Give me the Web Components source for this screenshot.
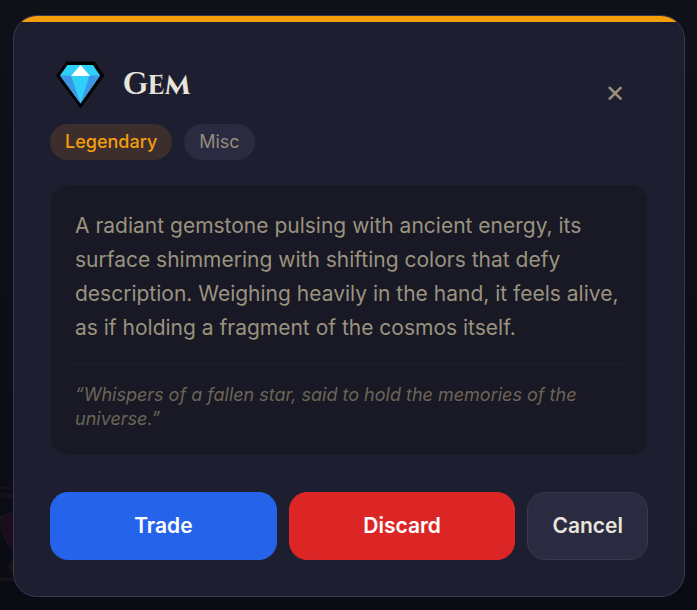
<!DOCTYPE html>
<html lang="en">
<head>
<meta charset="utf-8">
<meta name="viewport" content="width=device-width, initial-scale=1">
<title>Gem</title>
<style>
html, body { height: 100%; }
body { margin: 0; background: #0d0d15; font-family: Inter, "Liberation Sans", sans-serif; }
</style>
</head>
<body>
<item-scene>
  <item-dialog label="Gem">
    <gem-icon slot="icon"></gem-icon>
    <span slot="title">Gem</span>
    <item-tag slot="tags" tone="legendary">Legendary</item-tag>
    <item-tag slot="tags">Misc</item-tag>
    <item-lore>
      A radiant gemstone pulsing with ancient energy, its surface shimmering with shifting colors that defy description. Weighing heavily in the hand, it feels alive, as if holding a fragment of the cosmos itself.
      <span slot="quote">“Whispers of a fallen star, said to hold the memories of the universe.”</span>
    </item-lore>
    <item-action slot="actions" tone="trade">Trade</item-action>
    <item-action slot="actions" tone="discard">Discard</item-action>
    <item-action slot="actions">Cancel</item-action>
  </item-dialog>
</item-scene>
<script>
const define = (name, html, setup) => {
  const template = document.createElement("template");
  template.innerHTML = html;
  customElements.define(name, class extends HTMLElement {
    constructor() {
      super();
      this.attachShadow({ mode: "open" }).append(template.content.cloneNode(true));
    }
    connectedCallback() { if (setup) setup(this); }
  });
};

define("item-scene", `
<style>
:host { display: block; position: relative; box-sizing: border-box; min-height: 100%; padding: 15px 12px 12px 13px;
  background: linear-gradient(#101018, #0d0d17 60%, #0b0b14); }
.backdrop { position: absolute; left: 0; bottom: 0; width: 60px; height: 140px; }
</style>
<svg class="backdrop" viewBox="0 0 60 140" aria-hidden="true">
  <path d="M0 17H60V19H0Z M0 23H60V28H0Z" fill="#15111a"/>
  <path d="M0 108H60V111H0Z" fill="#171216"/>
  <path d="M18 40Q10 43 1 47Q0 66 14 80L40 60Z" fill="#1d0c19" stroke="#15151f" stroke-width="2"/>
  <circle cx="16" cy="97" r="7" fill="#1b1214"/>
</svg>
<slot></slot>`);

define("item-dialog", `
<style>
:host { display: block; position: relative; box-sizing: border-box; border: 1px solid #3a3850; border-radius: 24px;
  background: #1e1e31; overflow: hidden; }
.bar { height: 6px; background: #f59e0b; }
.content { padding: 36px; }
header { display: flex; align-items: center; gap: 13px; height: 54px; }
h1 { margin: 0; flex: 1; font: bold 30px/42px Cinzel, "Liberation Serif", serif; color: #e8e4dc; }
button { align-self: flex-end; width: 66px; height: 36px; padding: 0; border: 0; background: none; color: #9a917c;
  font: 500 24px/36px Inter, "Liberation Sans", sans-serif; cursor: pointer; }
.tags { display: flex; flex-wrap: wrap; gap: 12px; margin: 12px 0 24px; }
.actions { display: flex; gap: 12px; margin-top: 36px; }
</style>
<div class="bar"></div>
<div class="content">
  <header><slot name="icon"></slot><h1><slot name="title"></slot></h1><button type="button" aria-label="Close">✕</button></header>
  <div class="tags"><slot name="tags"></slot></div>
  <slot></slot>
  <div class="actions"><slot name="actions"></slot></div>
</div>`, el => {
  el.setAttribute("role", "dialog");
  el.setAttribute("aria-label", el.getAttribute("label"));
});

define("gem-icon", `
<style>
:host { display: block; width: 60px; height: 54px; }
svg { display: block; width: 60px; height: 54px; }
</style>
<svg viewBox="0 0 60 54" aria-hidden="true">
  <path d="M16.5 3.5H44.5L54.5 17.5L30.5 50.5L6 17.5Z"/>
  <path d="M17.5 7H43L50 17.5L30.5 45.5L10 17.5Z" fill="#2ed0fa"/>
  <path d="M10 17.5H21L30.5 45.5Z M50 17.5H39.5L30.5 45.5Z" fill="#3d96e3"/>
  <path d="M30.5 7L40 18H21Z" fill="#fff"/>
</svg>`);

define("item-tag", `
<style>
:host { display: block; padding: 6px 15px; border-radius: 18px; background: #2a2a40; color: #938d7d; font-size: 18px; line-height: 24px; }
:host([tone="legendary"]) { background: #3b2e2d; color: #f59e0b; font-weight: 500; }
</style>
<slot></slot>`);

define("item-lore", `
<style>
:host { display: block; padding: 24px; border: 1px solid #1e1e2f; border-radius: 18px; background: #191825; }
p { margin: 0; }
.text { color: #9a937f; font-size: 21px; line-height: 34px; }
.quote { margin-top: 19px; padding-top: 18px; border-top: 1px solid #20202f; color: #6b6557; font-size: 18px; line-height: 24px; font-style: italic; }
</style>
<p class="text"><slot></slot></p>
<p class="quote"><slot name="quote"></slot></p>`);

define("item-action", `
<style>
:host { display: block; }
:host([tone]) { flex: 1; }
button { width: 100%; height: 68px; padding: 0 24px; border: 1px solid #3a3850; border-radius: 18px; background: #2a2a40; color: #e8e4dc;
  font: 600 21px/30px Inter, "Liberation Sans", sans-serif; cursor: pointer; }
:host([tone]) button { color: #fff; }
:host([tone="trade"]) button { background: #2563eb; border-color: #2563eb; }
:host([tone="discard"]) button { background: #dc2626; border-color: #dc2626; }
</style>
<button type="button"><slot></slot></button>`);
</script>
</body>
</html>
